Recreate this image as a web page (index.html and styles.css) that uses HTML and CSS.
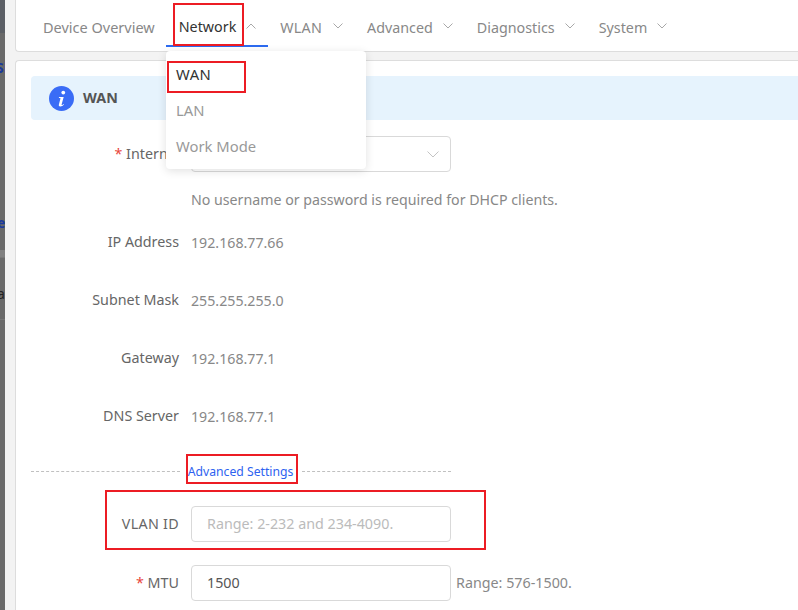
FILE: index.html
```html
<!DOCTYPE html>
<html lang="en">
<head>
<meta charset="utf-8">
<title>WAN</title>
<link rel="stylesheet" href="styles.css">
</head>
<body>
<div class="page">
  <aside class="strip">
    <div class="strip-top"></div>
    <div class="strip-frag strip-a"><span class="frag-blue">Si</span></div>
    <div class="strip-frag strip-b"><span class="frag-blue">e</span></div>
    <div class="strip-band"></div>
    <div class="strip-frag strip-c"><span>a</span></div>
    <div class="strip-rest"></div>
  </aside>
  <main class="main">
    <nav class="topbar">
      <div class="nav-item first">Device Overview</div>
      <div class="nav-item active">
        <span class="nav-label">Network</span>
        <svg class="caret" viewBox="0 0 10 6"><path d="M.5 5.500 5 1l4.500 4.500"/></svg>
      </div>
      <div class="nav-item nav-wlan">
        <span class="nav-label">WLAN</span>
        <svg class="caret" viewBox="0 0 10 6"><path d="M.5.500 5 5 9.500.5"/></svg>
      </div>
      <div class="nav-item">
        <span class="nav-label">Advanced</span>
        <svg class="caret" viewBox="0 0 10 6"><path d="M.5.500 5 5 9.500.5"/></svg>
      </div>
      <div class="nav-item">
        <span class="nav-label">Diagnostics</span>
        <svg class="caret" viewBox="0 0 10 6"><path d="M.5.500 5 5 9.500.5"/></svg>
      </div>
      <div class="nav-item">
        <span class="nav-label">System</span>
        <svg class="caret" viewBox="0 0 10 6"><path d="M.5.500 5 5 9.500.5"/></svg>
      </div>
    </nav>

    <ul class="dropdown">
      <li class="current">WAN</li>
      <li>LAN</li>
      <li>Work Mode</li>
    </ul>

    <section class="card">
      <div class="banner">
        <svg class="info" viewBox="0 0 24 24">
          <circle cx="12" cy="12" r="12" fill="#3a6cf6"/>
          <circle cx="13.700" cy="6.300" r="1.800" fill="#fff"/>
          <path d="M9.500 10.600h4.600l-2 7.200c-.1.500.3.600.7.400l1.300-.9.300.5c-1 1.100-2.300 1.900-3.500 1.900-1.300 0-1.700-.8-1.400-1.900l1.500-5.800c.1-.4-.1-.6-.4-.6h-1z" fill="#fff"/>
        </svg>
        <span class="banner-title">WAN</span>
      </div>

      <form class="form">
        <div class="row row-select">
          <label class="label"><span class="req">*</span> Internet</label>
          <div class="control select">
            <span>DHCP</span>
            <svg class="select-caret" viewBox="0 0 12 7"><path d="M.5.500 6 6 11.500.5"/></svg>
          </div>
        </div>
        <div class="row row-hint">
          <span class="label"></span>
          <span class="value">No username or password is required for DHCP clients.</span>
        </div>
        <div class="row row-info">
          <span class="label">IP Address</span>
          <span class="value">192.168.77.66</span>
        </div>
        <div class="row row-info">
          <span class="label">Subnet Mask</span>
          <span class="value">255.255.255.0</span>
        </div>
        <div class="row row-info">
          <span class="label">Gateway</span>
          <span class="value">192.168.77.1</span>
        </div>
        <div class="row row-info">
          <span class="label">DNS Server</span>
          <span class="value">192.168.77.1</span>
        </div>
        <div class="divider">
          <span class="dash"></span>
          <a class="adv-link">Advanced Settings</a>
          <span class="dash"></span>
        </div>
        <div class="row row-vlan">
          <label class="label">VLAN ID</label>
          <div class="control placeholder">Range: 2-232 and 234-4090.</div>
        </div>
        <div class="row row-mtu">
          <label class="label"><span class="req">*</span> MTU</label>
          <div class="control">1500</div>
          <span class="range">Range: 576-1500.</span>
        </div>
      </form>
    </section>
  </main>

  <div class="mark mark-network"></div>
  <div class="mark mark-wan"></div>
  <div class="mark mark-adv"></div>
  <div class="mark mark-vlan"></div>
</div>
</body>
</html>
```

FILE: styles.css
```css
* { box-sizing: border-box; }

html, body {
  margin: 0;
  height: 100%;
  overflow: hidden;
}

body {
  font-family: "Noto Sans", "Open Sans", Arial, sans-serif;
  font-size: 14.3px;
  color: #666;
  background: #f3f3f3;
}

.page {
  position: relative;
  display: flex;
  width: 798px;
  height: 610px;
  overflow: hidden;
}

/* clipped window behind */
.strip {
  flex: 0 0 5px;
  display: flex;
  flex-direction: column;
  overflow: hidden;
  background: #6a6a6a;
  font-size: 14px;
  line-height: 20px;
}
.strip-top { height: 33px; background: #5c6066; flex: none; }
.strip-frag { flex: none; white-space: nowrap; }
.strip-a { height: 40px; padding-top: 25px; margin-left: -4px; }
.strip-b { height: 150px; padding-top: 140px; margin-left: -3px; }
.strip-band { height: 7px; background: #808080; flex: none; margin-top: 27px; }
.strip-c { height: 63px; padding-top: 26px; margin-left: -3px; border-top: 1px solid #777; color: #222; border-bottom: 1px solid #777; }
.strip-rest { flex: 1; }
.frag-blue { color: #1b3a9e; font-weight: 700; }

.main {
  flex: 1;
  min-width: 0;
  padding-left: 10px;
}

.topbar {
  display: flex;
  align-items: flex-start;
  height: 53px;
  margin-top: -1px;
  padding-left: 15px;
  background: #fff;
  border: 1px solid #ddd;
  border-right: 0;
  border-radius: 0 0 0 4px;
}

.nav-item {
  display: flex;
  align-items: center;
  height: 47px;
  padding: 7px 12px 0;
  color: #888;
  white-space: nowrap;
}
.nav-item.first { padding-right: 11px; font-size: 14.5px; }
.nav-item.active {
  color: #333;
  padding: 7px 12px 0 13px;
  border-bottom: 2px solid #2d6bf0;
}
.nav-item.active .caret { margin-top: -1px; }
.nav-label { margin-right: 10px; }
.nav-wlan .nav-label { margin-right: 11px; letter-spacing: .25px; }

.caret {
  width: 10px;
  height: 6px;
  margin-top: -3px;
  fill: none;
  stroke: #a8a8a8;
  stroke-width: 1;
}

.dropdown {
  position: absolute;
  left: 166px;
  top: 51px;
  width: 200px;
  height: 118px;
  margin: 0;
  padding: 5px 0;
  list-style: none;
  background: #fff;
  border-radius: 4px;
  box-shadow: 0 2px 10px rgba(0, 0, 0, .12);
  z-index: 2;
  font-size: 14.8px;
}
.dropdown li {
  height: 36px;
  line-height: 36px;
  padding-left: 10px;
  color: #999;
}
.dropdown li.current { color: #333; letter-spacing: .5px; }

.card {
  margin-top: 8px;
  height: 560px;
  padding: 15px 0 0 15px;
  background: #fff;
  border: 1px solid #ddd;
  border-right: 0;
  border-radius: 4px 0 0 0;
}

.banner {
  display: flex;
  align-items: center;
  height: 44px;
  padding-left: 18px;
  background: #e6f3fd;
  border-radius: 4px 0 0 4px;
}
.info { width: 25px; height: 25px; margin-right: 9px; flex: none; }
.banner-title { font-weight: 700; color: #555; margin-top: -2px; }

.form { margin-left: -15px; }

.row { display: flex; align-items: center; }
.label {
  flex: 0 0 163px;
  width: 163px;
  padding-bottom: 2px;
  text-align: right;
  color: #666;
  white-space: nowrap;
}
.row > .label { margin-right: 12px; }
.row-info .label { padding-bottom: 1px; }
.row-select > .label { flex-basis: 165px; width: 165px; margin-right: 10px; }
.row-vlan .label { letter-spacing: .3px; }
.req { color: #e8443a; }
.value { font-size: 14.2px; color: #888; white-space: nowrap; }

.control {
  width: 260px;
  height: 36px;
  padding: 0 15px;
  line-height: 33px;
  color: #555;
  background: #fff;
  border: 1px solid #d9d9d9;
  border-radius: 4px;
  flex: none;
}
.placeholder { color: #bbb; }

.select { display: flex; align-items: center; justify-content: space-between; padding-right: 11px; }
.select-caret {
  width: 12px;
  height: 7px;
  fill: none;
  stroke: #c4c4c4;
  stroke-width: 1;
}

.row-select { margin-top: 16px; }
.row-hint { height: 20px; margin-top: 17px; }
.row-info { height: 20px; margin-top: 38px; }
.row-hint + .row-info { margin-top: 23px; }

.divider {
  display: flex;
  align-items: center;
  width: 420px;
  margin: 35px 0 0 15px;
  height: 20px;
}
.dash { flex: 1; border-top: 1px dashed #c0c0c0; }
.adv-link {
  padding: 0 9px 0 8px;
  font-size: 12.2px;
  color: #2d62f0;
  white-space: nowrap;
}

.row-vlan { margin-top: 25px; }
.row-mtu { margin-top: 23px; }
.range { margin-left: 5px; padding-bottom: 2px; color: #888; white-space: nowrap; }

/* red annotations over the screenshot */
.mark {
  position: absolute;
  border: 2px solid #ec1c24;
  z-index: 3;
  pointer-events: none;
}
.mark-network { left: 173px; top: 3px; width: 71px; height: 43px; }
.mark-wan { left: 167px; top: 61px; width: 79px; height: 32px; }
.mark-adv { left: 186px; top: 454px; width: 112px; height: 30px; }
.mark-vlan { left: 105px; top: 490px; width: 381px; height: 60px; }
```
